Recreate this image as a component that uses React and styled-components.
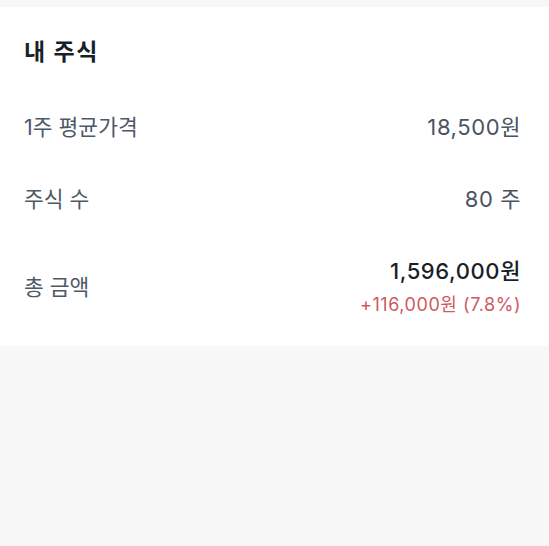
//-----------------IMPORTS---------------
import React from "react";
import styled, { createGlobalStyle } from "styled-components";
//---------------END_IMPORTS---------------

//------------STYLED_COMPONENTS------------
const GlobalStyle = createGlobalStyle`
  html, body {
    margin: 0;
    padding: 0;
    background: #f7f7f8;
    font-family: Inter, "Noto Sans CJK KR", sans-serif;
  }
`;

const Page = styled.div`
  padding-top: 7px;
  min-height: 539px;
`;

const Card = styled.section`
  background: #ffffff;
  padding: 30px 28px 7px 24px;
`;

const Title = styled.h2`
  margin: 0 0 24px;
  font-size: 23px;
  line-height: 30px;
  font-weight: 700;
  color: #191f28;
  letter-spacing: 1.5px;
`;

const Row = styled.div`
  display: flex;
  justify-content: space-between;
  align-items: center;
  padding: 22px 0;
`;

const Label = styled.span`
  font-size: 21.5px;
  line-height: 28px;
  color: #4e5968;
`;

const Value = styled.span`
  font-size: 22px;
  line-height: 28px;
  color: #4a5462;
  letter-spacing: 0.6px;
`;

const Total = styled.div`
  display: flex;
  flex-direction: column;
  align-items: flex-end;
  gap: 8px;
`;

const TotalValue = styled.span`
  font-size: 22px;
  line-height: 28px;
  font-weight: 500;
  color: #191f28;
  letter-spacing: 0.6px;
`;

const Change = styled.span`
  font-size: 18px;
  line-height: 24px;
  color: ${(p) => (p.up ? "#cd5a5f" : "#3182f6")};
  letter-spacing: 0.55px;
`;
//----------END_STYLED_COMPONENTS----------

//-----------------COMPONENT---------------
const App = () => {
  return (
    <>
      <GlobalStyle />
      <Page>
        <Card>
          <Title>내 주식</Title>
          <Row>
            <Label>1주 평균가격</Label>
            <Value>18,500원</Value>
          </Row>
          <Row>
            <Label>주식 수</Label>
            <Value>80 주</Value>
          </Row>
          <Row>
            <Label>총 금액</Label>
            <Total>
              <TotalValue>1,596,000원</TotalValue>
              <Change up>+116,000원 (7.8%)</Change>
            </Total>
          </Row>
        </Card>
      </Page>
    </>
  );
};
//---------------END_COMPONENT---------------

export default App;
